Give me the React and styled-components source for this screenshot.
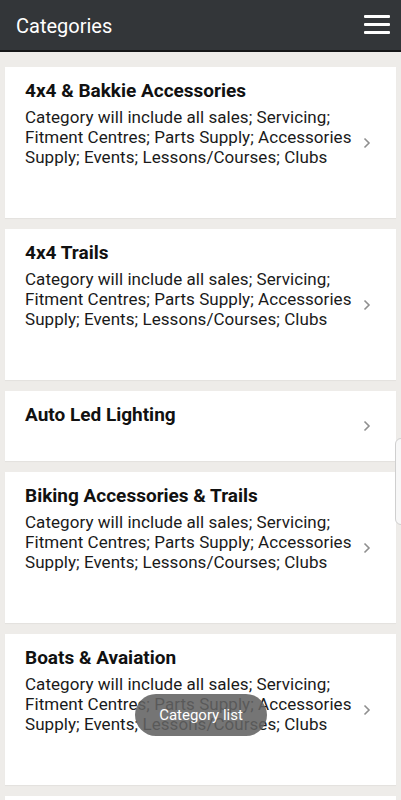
import React from 'react'
import styled, { createGlobalStyle } from 'styled-components'

const GlobalStyle = createGlobalStyle`
  html, body {
    margin: 0;
    padding: 0;
    height: 800px;
    overflow: hidden;
    background: #eeece9;
    font-family: Roboto, "Liberation Sans", sans-serif;
  }
`

const Screen = styled.div`
  position: relative;
  width: 401px;
  height: 800px;
  overflow: hidden;
  background: #eeece9;
`

const Header = styled.header`
  display: flex;
  align-items: center;
  justify-content: space-between;
  height: 50px;
  padding: 0 11px 0 16px;
  background: #333639;
  border-bottom: 2px solid #151617;
`

const HeaderTitle = styled.h1`
  margin: 0;
  font-size: 20px;
  font-weight: 400;
  color: #fff;
  padding-top: 1px;
`

const MenuButton = styled.div`
  display: flex;
  flex-direction: column;
  gap: 5px;
  width: 26px;
  margin-top: -1px;
`

const MenuBar = styled.span`
  display: block;
  height: 3px;
  background: #fff;
  border-radius: 1px;
`

const List = styled.div`
  display: flex;
  flex-direction: column;
  gap: 11px;
  padding: 15px 5px 0;
`

const Card = styled.div`
  display: flex;
  align-items: center;
  min-height: ${({ $empty }) => ($empty ? '40px' : 'auto')};
  background: #fff;
  box-shadow: 0 1px 1px rgba(0, 0, 0, 0.04);
`

const CardBody = styled.div`
  flex: 1;
  padding: 12px 0 34px 20px;
`

const CardTitle = styled.h2`
  margin: 0;
  font-size: 19px;
  line-height: 24px;
  font-weight: 700;
  color: #111;
`

const CardText = styled.p`
  margin: 4px 0 17px;
  font-size: 17px;
  line-height: 20px;
  letter-spacing: 0.05px;
  color: #1a1a1a;
`

const Chevron = styled.div`
  display: flex;
  align-items: center;
  justify-content: center;
  width: 40px;
  flex-shrink: 0;
  padding-right: 18px;
  box-sizing: border-box;
`

const SideHandle = styled.div`
  position: absolute;
  right: -6px;
  top: 438px;
  width: 10px;
  height: 85px;
  border: 1px solid #cfcfcf;
  border-radius: 6px;
  background: #f7f7f7;
`

const Toast = styled.div`
  position: absolute;
  top: 694px;
  left: 135px;
  width: 132px;
  height: 42px;
  border-radius: 21px;
  background: rgba(98, 98, 98, 0.88);
  color: #fff;
  font-size: 15px;
  display: flex;
  align-items: center;
  justify-content: center;
`

const DESC = 'Category will include all sales; Servicing; Fitment Centres; Parts Supply; Accessories Supply; Events; Lessons/Courses; Clubs'

const categories = [
  { title: '4x4 & Bakkie Accessories', text: DESC },
  { title: '4x4 Trails', text: DESC },
  { title: 'Auto Led Lighting' },
  { title: 'Biking Accessories & Trails', text: DESC },
  { title: 'Boats & Avaiation', text: DESC },
]

const ChevronIcon = () => (
  <svg width="8" height="12" viewBox="0 0 8 12">
    <path d="M1.5 1.5 L6 6 L1.5 10.5" fill="none" stroke="#8f8f8f" strokeWidth="1.6" />
  </svg>
)

export default function App() {
  return (
    <Screen>
      <GlobalStyle />
      <Header>
        <HeaderTitle>Categories</HeaderTitle>
        <MenuButton>
          <MenuBar />
          <MenuBar />
          <MenuBar />
        </MenuButton>
      </Header>
      <List>
        {categories.map((c) => (
          <Card key={c.title}>
            <CardBody>
              <CardTitle>{c.title}</CardTitle>
              {c.text && <CardText>{c.text}</CardText>}
            </CardBody>
            <Chevron>
              <ChevronIcon />
            </Chevron>
          </Card>
        ))}
        <Card $empty />
      </List>
      <SideHandle />
      <Toast>Category list</Toast>
    </Screen>
  )
}
